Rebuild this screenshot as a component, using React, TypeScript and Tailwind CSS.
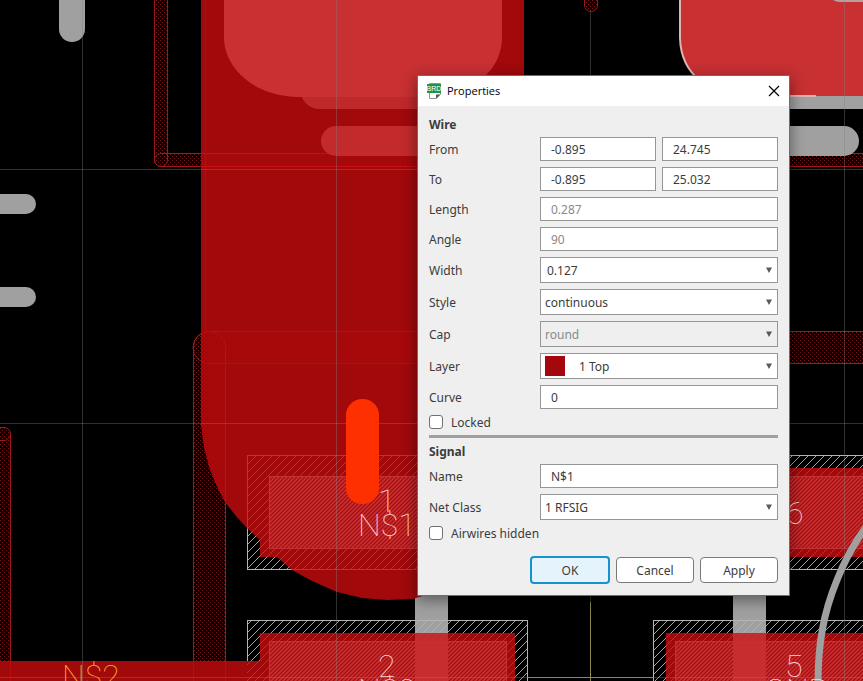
import type { ReactNode } from "react";

const field =
  "block h-6 w-full min-w-0 border border-[#969696] bg-white px-[10px] text-[#3c3c3c] outline-none disabled:text-[#8a8a8a]";
const combo =
  "block h-[26px] w-full appearance-none border border-[#969696] bg-white pr-5 pt-px text-[#3c3c3c] outline-none disabled:bg-[#efefef] disabled:text-[#8a8a8a] disabled:opacity-100";

function Row({ label, id, children }: { label: string; id: string; children: ReactNode }) {
  return (
    <div className="flex items-center">
      <label htmlFor={id} className="w-[111px] shrink-0 pt-[2px]">{label}</label>
      <div className="flex min-w-0 flex-1 gap-[6px]">{children}</div>
    </div>
  );
}

function Combo({ id, value, pad, disabled, swatch }: { id: string; value: string; pad: string; disabled?: boolean; swatch?: boolean }) {
  return (
    <div className="relative w-full">
      <select id={id} disabled={disabled} className={`${combo} ${pad}`}>
        <option>{value}</option>
      </select>
      {swatch && <span className="pointer-events-none absolute left-[5px] top-[3px] h-5 w-5 bg-[#a5080c]" />}
      <svg className="pointer-events-none absolute right-[6px] top-[10px]" width="6" height="6" aria-hidden="true">
        <path d="M0 0.5H6L3 6Z" fill="#5a5a5a" />
      </svg>
    </div>
  );
}

function Check({ id, label }: { id: string; label: string }) {
  return (
    <div className="flex h-[14px] items-center gap-2">
      <input id={id} type="checkbox" className="h-[14px] w-[14px] appearance-none rounded-[3px] border border-[#707070] bg-white" />
      <label htmlFor={id} className="pt-[2px]">{label}</label>
    </div>
  );
}

function Pad({ x, y, w = 280 }: { x: number; y: number; w?: number }) {
  return (
    <g>
      <rect x={x + 0.5} y={y + 0.5} width={w} height="114" fill="url(#hatch)" stroke="#b4b4b4" />
      <rect x={x + 13} y={y + 13} width={w - 25} height="89" fill="#a1090b" />
    </g>
  );
}

function PadOverlay({ x, y, w = 280 }: { x: number; y: number; w?: number }) {
  return (
    <g>
      <rect x={x + 13} y={y + 13} width={w - 25} height="89" fill="url(#hatchFaint)" />
      <rect x={x + 22.5} y={y + 21.5} width={w - 43} height="72" fill="url(#dense)" stroke="#c23234" />
    </g>
  );
}

const pour =
  "M201 0H524V500L423 596L412 599L387 600L362 598L337 592L312 581L292 570L277 557H260V540L247 528L236 516L225 502L218 489L210 470L204 448L201 425Z";

function Board() {
  return (
    <svg className="absolute inset-0 h-full w-full" aria-hidden="true">
      <defs>
        <pattern id="dots" width="4" height="4" patternUnits="userSpaceOnUse">
          <path d="M0 0h1v1H0zM2 2h1v1H2z" fill="#7c1517" />
        </pattern>
        <pattern id="dotsFaint" width="4" height="4" patternUnits="userSpaceOnUse">
          <path d="M0 0h1v1H0zM2 2h1v1H2z" fill="#b00d10" />
        </pattern>
        <pattern id="hatch" width="8" height="8" patternUnits="userSpaceOnUse">
          <path d="M-1 9L9 -1M-1 1L1 -1M7 9L9 7" stroke="#b4b4b4" strokeWidth="0.9" />
        </pattern>
        <pattern id="hatchFaint" width="8" height="8" patternUnits="userSpaceOnUse">
          <path d="M-1 9L9 -1M-1 1L1 -1M7 9L9 7" stroke="#c03436" strokeWidth="0.9" />
        </pattern>
        <pattern id="dense" width="4" height="4" patternUnits="userSpaceOnUse">
          <path d="M-1 5L5 -1M-1 1L1 -1M3 5L5 3" stroke="#c83032" strokeWidth="1.6" />
        </pattern>
        <clipPath id="pourClip"><path d={pour} /></clipPath>
      </defs>

      {/* keepout outlines */}
      <g fill="url(#dots)" stroke="#a0181a">
        <path d="M154.500 -5V160A6.500 6.500 0 0 0 161 166.500A6.500 6.500 0 0 0 167.500 160V-5Z" />
        <path d="M870 153.500H161A6.500 6.500 0 0 0 161 166.500H870" />
        <path d="M193.500 700V347A16 16 0 0 1 225.500 347V700Z" />
        <path d="M870 331.500H209A16 16 0 0 0 209 363.500H870" />
        <path d="M-5 427.500H4A6.500 6.500 0 0 1 10.500 434V700H-5" />
        <path d="M-5 440.500H4A6.500 6.500 0 0 0 10.500 434" fill="none" />
        <path d="M584.500 -5V5A6.500 6.500 0 0 0 597.500 5V-5" />
      </g>

      {/* silkscreen */}
      <g fill="#a0a0a0">
        <rect x="59" y="-30" width="26" height="72" rx="13" />
        <rect x="-30" y="194" width="66" height="20" rx="10" />
        <rect x="-30" y="287" width="66" height="20" rx="10" />
        <rect x="700" y="77" width="170" height="32" />
        <rect x="321" y="126" width="538" height="30" rx="15" />
        <rect x="415" y="415" width="33" height="270" />
        <rect x="733" y="415" width="33" height="270" />
      </g>

      <Pad x={247} y={455} />
      <Pad x={247} y={620} />
      <Pad x={653} y={455} />
      <Pad x={653} y={620} />

      {/* copper */}
      <path d={pour} fill="#a1090b" />
      <path d="M0 661H262V681H0Z" fill="#a1090b" />
      <g clipPath="url(#pourClip)">
        <rect x="193.500" y="331.500" width="32" height="400" rx="16" fill="url(#dotsFaint)" stroke="#c00d10" />
        <rect x="193.500" y="331.500" width="700" height="32" rx="16" fill="url(#dotsFaint)" stroke="#b80c0f" />
        <path d="M200 153.500H530M200 166.500H530" stroke="#c90f12" />
        <rect x="200" y="154" width="330" height="12" fill="url(#dotsFaint)" />
        <path d="M205.500 0V331" stroke="#bd0a0d" />
        <rect x="247.500" y="455.500" width="280" height="114" fill="url(#hatchFaint)" stroke="#bd3234" />
      </g>
      <path d="M193.500 661V681M225.500 661V681M10.500 661V681" stroke="#b80c0f" />
      <rect x="247" y="661" width="14" height="20" fill="url(#hatchFaint)" />
      <PadOverlay x={247} y={455} />
      <PadOverlay x={247} y={620} />
      <PadOverlay x={653} y={455} />
      <PadOverlay x={653} y={620} />
      <path d="M300 77H524V109H320A20 20 0 0 1 300 89Z" fill="#bf292b" />
      <path d="M524 126H336A15 15 0 0 0 336 156H524Z" fill="#c22a2c" />
      <path d="M224 0H502V40C500 76 464 97 430 97H296C252 95 226 68 224 40Z" fill="#c83032" />
      <path d="M680 -5V38C681 74 708 96 752 96H870V-5Z" fill="#c83032" />
      <path d="M680 -5V38C681 74 708 96 752 96H816" fill="none" stroke="#dcb4b4" strokeWidth="2" />
      <path d="M833 0Q836 2 840 2H863V0Z" fill="#b8a0a0" />
      <rect x="415" y="633" width="33" height="48" fill="#c83032" fillOpacity="0.85" />
      <rect x="733" y="633" width="33" height="48" fill="#c83032" fillOpacity="0.85" />

      {/* grid */}
      <path d="M82.500 0V681M336.500 0V681M590.500 12V681M844.500 0V681M0 169.500H863M0 423.500H863M0 677.500H863" stroke="#808080" strokeOpacity="0.38" />
      <path d="M590.500 602V681M528 677.500H653" stroke="#8a8a4c" />

      <path d="M866 527C855 542 846 557 837 580C823 614 818 645 818 684" fill="none" stroke="#a0a0a0" strokeWidth="7" />
      <rect x="346" y="399" width="33" height="105" rx="16" fill="#ff3000" />

      <g fontSize="32" className="font-['Roboto',sans-serif] font-thin" fill="#ffd4d4">
        <text x="378" y="512">1</text>
        <text x="358" y="536">N$1</text>
        <text x="378" y="677">2</text>
        <text x="358" y="701">N$2</text>
        <text x="786" y="524">6</text>
        <text x="785" y="677">5</text>
        <text x="764" y="701">GND</text>
        <text x="62" y="687" fill="#ffb030">N$2</text>
      </g>
    </svg>
  );
}

function BoardIcon() {
  return (
    <svg width="15" height="16" viewBox="0 0 15 16" aria-hidden="true">
      <path d="M2.500 0.500H13.500V11L9.500 15.500H2.500Z" fill="#fff" stroke="#8c9690" />
      <path d="M9 15.500V11.500H13.500Z" fill="#4f5b54" />
      <rect x="0" y="1" width="14" height="9" fill="#1f9448" />
      <text x="7" y="8" textAnchor="middle" fontSize="7" fill="#fff" className="font-['Liberation_Sans',sans-serif]">BRD</text>
    </svg>
  );
}

export default function App() {
  const button = "h-[26px] w-[78px] rounded-[4px] border border-[#7a7a7a] bg-white pt-px";
  return (
    <main className="relative h-screen w-full overflow-hidden bg-black font-['Noto_Sans',sans-serif] text-xs text-[#3c3c3c]">
      <Board />
      <section
        role="dialog"
        aria-labelledby="title"
        className="absolute left-[417px] top-[75px] w-[373px] border border-[#2a80bd] bg-[#efefef] shadow-[0_4px_14px_rgba(0,0,0,0.45)]"
      >
        <header className="flex h-[30px] items-center bg-white pl-[9px] pr-[9px]">
          <BoardIcon />
          <h1 id="title" className="ml-[5px] flex-1 font-['Open_Sans',sans-serif] text-[11px] text-black">Properties</h1>
          <button aria-label="Close" className="flex h-3 w-3 items-center justify-center">
            <svg width="12" height="12" viewBox="0 0 12 12">
              <path d="M1 1L11 11M11 1L1 11" stroke="#000" strokeWidth="1.200" />
            </svg>
          </button>
        </header>
        <form className="flex flex-col px-[11px] pb-[11px] pt-[7px]" onSubmit={(e) => e.preventDefault()}>
          <h2 className="h-6 font-bold leading-6">Wire</h2>
          <div className="flex flex-col gap-[6px]">
            <Row label="From" id="from">
              <input id="from" className={field} defaultValue="-0.895" />
              <input aria-label="From Y" className={field} defaultValue="24.745" />
            </Row>
            <Row label="To" id="to">
              <input id="to" className={field} defaultValue="-0.895" />
              <input aria-label="To Y" className={field} defaultValue="25.032" />
            </Row>
            <Row label="Length" id="length"><input id="length" disabled className={field} defaultValue="0.287" /></Row>
            <Row label="Angle" id="angle"><input id="angle" disabled className={field} defaultValue="90" /></Row>
            <Row label="Width" id="width"><Combo id="width" value="0.127" pad="pl-[6px]" /></Row>
            <Row label="Style" id="style"><Combo id="style" value="continuous" pad="pl-1" /></Row>
            <Row label="Cap" id="cap"><Combo id="cap" value="round" pad="pl-1" disabled /></Row>
            <Row label="Layer" id="layer"><Combo id="layer" value="1 Top" pad="pl-[38px]" swatch /></Row>
            <Row label="Curve" id="curve"><input id="curve" className={field} defaultValue="0" /></Row>
            <Check id="locked" label="Locked" />
            <hr className="h-[3px] border-0 bg-[#a0a0a0]" />
          </div>
          <h2 className="mt-[2px] h-6 font-bold leading-6">Signal</h2>
          <div className="flex flex-col gap-[6px]">
            <Row label="Name" id="name"><input id="name" className={field} defaultValue="N$1" /></Row>
            <Row label="Net Class" id="net"><Combo id="net" value="1 RFSIG" pad="pl-1" /></Row>
            <Check id="airwires" label="Airwires hidden" />
          </div>
          <div className="mt-4 flex items-center justify-end gap-[6px]">
            <button className="h-7 w-20 rounded-[4px] border-2 border-[#1593cf] bg-[#e5f4fc] pt-px">OK</button>
            <button type="button" className={button}>Cancel</button>
            <button type="button" className={button}>Apply</button>
          </div>
        </form>
      </section>
    </main>
  );
}
